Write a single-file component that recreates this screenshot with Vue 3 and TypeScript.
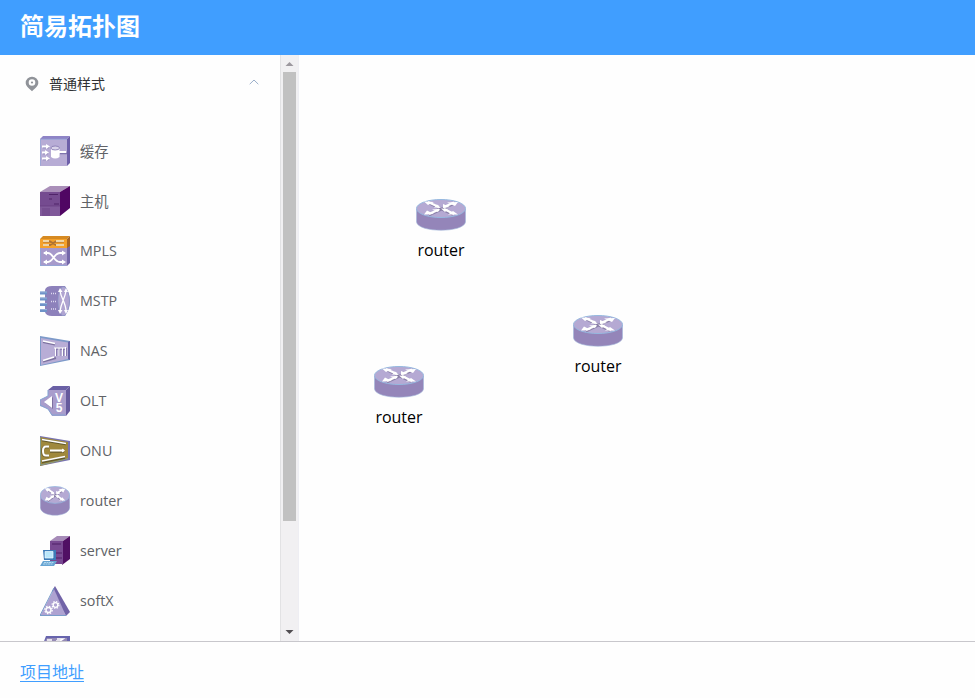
<script setup lang="ts">
interface PaletteItem {
  icon: string
  label: string
  marks?: string[]
}
interface TopoNode {
  id: number
  x: number
  y: number
  label: string
}

const palette: PaletteItem[] = [
  { icon: 'cache', label: '缓存' },
  { icon: 'host', label: '主机' },
  { icon: 'mpls', label: 'MPLS' },
  { icon: 'mstp', label: 'MSTP' },
  { icon: 'nas', label: 'NAS' },
  { icon: 'olt', label: 'OLT', marks: ['V', '5'] },
  { icon: 'onu', label: 'ONU' },
  { icon: 'router', label: 'router' },
  { icon: 'server', label: 'server' },
  { icon: 'softx', label: 'softX' },
  { icon: 'switch', label: '' },
]

const nodes: TopoNode[] = [
  { id: 1, x: 116, y: 144, label: 'router' },
  { id: 2, x: 273, y: 260, label: 'router' },
  { id: 3, x: 74, y: 311, label: 'router' },
]
</script>

<template>
  <div class="page">
    <svg class="defs" width="0" height="0">
      <symbol id="cache" viewBox="0 0 30 30">
        <path d="M0 3 3 0H30L27 3Z" fill="#8e84c6" />
        <path d="M27 3 30 0V27L27 30Z" fill="#6d5fa9" />
        <path d="M0 3H27V30H0Z" fill="#b7acd5" />
        <path d="M.4 29.5V3.2H27" fill="none" stroke="#93a5d8" stroke-width=".8" />
        <path d="M3 11.5H9M3 17.5H8M3 23.5H9M20 17.5H27" stroke="#7f74ad" stroke-width="1.6" />
        <path d="M2 10.5H7M2 16.5H6M2 22.5H7M19 16H26" stroke="#fff" stroke-width="1.8" />
        <path d="M6 8 10 10.5 6 13ZM5 14 9 16.5 5 19ZM6 20 10 22.5 6 25Z" fill="#fff" />
        <path d="M11 12V21Q15 24 19.500 21V12Z" fill="#fff" />
        <ellipse cx="15.200" cy="12" rx="4.300" ry="2" fill="#d9d3e9" stroke="#8175af" stroke-width=".8" />
      </symbol>
      <symbol id="host" viewBox="0 0 30 30">
        <path d="M0 6 10 0H30L20 6Z" fill="#aa8fb9" />
        <path d="M20 6 30 0V22L20 30Z" fill="#500663" />
        <path d="M0 6H20V30H0Z" fill="#754b90" />
        <path d="M0 20H20V30H0Z" fill="#80599a" />
        <path d="M0 20H20M3 22V30M5 22V30M7 22V30M9 22V30" stroke="#66397f" stroke-width=".7" />
        <path d="M9 8.500H18M9 13H12M14 18H19" stroke="#502469" stroke-width="1" />
      </symbol>
      <symbol id="mpls" viewBox="0 0 30 30">
        <path d="M0 3 3 0H30L27 3Z" fill="#d68a22" />
        <path d="M27 3 30 0V11L27 13Z" fill="#a96623" />
        <path d="M0 3H27V12H0Z" fill="#f4a12b" />
        <path d="M27 12 30 10V27L27 30Z" fill="#7467aa" />
        <path d="M0 12H27V30H0Z" fill="#a79acb" />
        <path d="M0 12V30H26" stroke="#83aede" fill="none" />
        <path d="M3 5.500H10L16 9H24M3 9H10L16 5.500H24" fill="none" stroke="#ac7234" stroke-width="1.800" />
        <path d="M3 5H9M3 9H9M16 5H24M16 9H24" stroke="#fff3cf" stroke-width="1.300" />
        <path d="M4 17H8C13 17 14 26 20 26H24M4 26H8C13 26 14 17 20 17H24" fill="none" stroke="#fff" stroke-width="1.800" />
        <path d="M3 17 7 14.500V19.500ZM3 26 7 23.500V28.500ZM26 17 22 14.500V19.500ZM26 26 22 23.500V28.500Z" fill="#fff" />
      </symbol>
      <symbol id="mstp" viewBox="0 0 30 30">
        <path d="M5 4Q6 0 12 0H25Q30 7 30 15T25 30H12Q6 30 5 26Z" fill="#8d81bb" />
        <path d="M22 1H25Q29.500 7 29.500 15T25 29.500H22Q18 23 18 15T22 1Z" fill="#b0a4d1" stroke="#8a9ac9" stroke-width=".6" />
        <path d="M0 7H7M0 13H7M0 18.500H7M0 24.500H7" stroke="#6f93c8" stroke-width="3" />
        <path d="M0 6H7M0 12H7M0 17.500H7M0 23.500H7" stroke="#a2b8dc" stroke-width=".8" />
        <path d="M11 7.500H17M11 15.500H17M11 23H17" stroke="#ded9ef" stroke-width="1.500" stroke-dasharray="1 1" />
        <path d="M20 5C21 12 26 17 26 25M26 5C25 12 21 17 20 25" stroke="#fff" stroke-width="1.300" fill="none" />
        <path d="M18 6 20 2 22.500 6ZM24 6 26 2 28 6ZM18 24 20 28 22.500 24ZM24 24 26 28 28 24Z" fill="#fff" />
      </symbol>
      <symbol id="nas" viewBox="0 0 30 30">
        <path d="M0 0 30 5V24L0 30Z" fill="#7d9ac9" />
        <path d="M1 2 28 6.500V23L1 29Z" fill="#b8add6" />
        <path d="M28 6 30 5V24L28 23Z" fill="#6862a8" />
        <path d="M3 6 15 8.500M3 25.500 16 22" stroke="#7c719f" stroke-width="2" />
        <path d="M3 5 15 7.500M3 24.500 14 21" stroke="#fff" stroke-width="1.700" />
        <path d="M15 13H26M16 13V20M19.500 13V20M23 13V20M26 12V20" stroke="#8175a9" stroke-width="1.700" />
        <path d="M14 12H25M15.500 12V20M19 12V20M22.500 12V20M25.500 11V20" stroke="#fff" stroke-width="1" />
      </symbol>
      <symbol id="olt" viewBox="0 0 30 30">
        <path d="M8 4 13 0H30L26 4Z" fill="#6a60a5" />
        <path d="M26 4 30 0V25L26 30Z" fill="#665a9d" />
        <path d="M8 4H26V30H12L8 23 0 20V14L8 10Z" fill="#a99dcc" />
        <path d="M8 4V10L0 14V19L8 23L12 29H25" fill="none" stroke="#82a4d2" />
        <path d="M13 11V23L5 17Z" fill="#7e719f" />
        <path d="M12 10V22L4 16Z" fill="#fff" />
      </symbol>
      <symbol id="onu" viewBox="0 0 30 30">
        <path d="M0 0 30 5V24L0 30Z" fill="#7772b3" />
        <path d="M0 1 28 6V23L0 30Z" fill="#9f883c" />
        <path d="M.5 1.500V29L28 22.500" fill="none" stroke="#819989" />
        <path d="M2 4 26 8M2 26 25 21.500" stroke="#62592c" stroke-width="2.500" />
        <path d="M2 3.500 26 7.500M2 25 25 20.500" stroke="#fff" stroke-width="1.600" />
        <path d="M9 11H6Q2.500 11 2.500 15Q2.500 20 6 20H9M10 15.500H24" fill="none" stroke="#756633" stroke-width="3" />
        <path d="M9 10.500H6Q3 10.500 3 15Q3 19.500 6 19.500H9M10 14.500H24" fill="none" stroke="#fff" stroke-width="2" />
        <path d="M22 12.500 25 14.500 22 16.500Z" fill="#fff" />
      </symbol>
      <symbol id="router" viewBox="0 0 50 32" preserveAspectRatio="none">
        <path d="M.5 10V23C2 34 48 34 49.500 23V10Z" fill="#9485b9" />
        <path d="M.5 10V23C2 34 48 34 49.500 23V10" fill="none" stroke="#a2b8dc" stroke-width=".6" />
        <ellipse cx="25" cy="9.500" rx="24.500" ry="9" fill="#b5a9d3" stroke="#95b8df" />
        <path d="M13 4 37 15.500M37 5 13 16" stroke="#8a7fa8" stroke-width="2.500" />
        <path d="M12 3 23 8M28 10 38 15M38 3.500 28 8M23 10.500 13 15" stroke="#fff" stroke-width="2.200" />
        <path d="M8 2.500 18 3 12 6ZM42 3 39 7 31 3.500ZM42 15.500H32L37 12ZM8 15.500 11 11.500 18 15Z" fill="#fff" />
        <path d="M18 8.500 25 9 21 5.500ZM32 10 25 9.500 29 13ZM27 5 27 9 34 8ZM16 10.500 24 10 22 13Z" fill="#fff" />
      </symbol>
      <symbol id="server" viewBox="0 0 30 30">
        <path d="M10 5 17 0H30L23 5Z" fill="#a68bb8" />
        <path d="M23 5 30 0V23L22 29Z" fill="#501064" />
        <path d="M10 5H23V28H10Z" fill="#784992" />
        <path d="M12 8H21M13 17H22M15 22H22" stroke="#4f2167" />
        <path d="M3 14H16V24H4Z" fill="#3c7bb8" />
        <path d="M5 15.500H13V22H5Z" fill="#b9e7fb" stroke="#eefaff" stroke-width=".7" />
        <path d="M3 25H17L14 30H0Z" fill="#67a4d2" />
        <path d="M4 26.500H14M3 28H13" stroke="#d4effb" stroke-width=".7" stroke-dasharray="2 .5" />
      </symbol>
      <symbol id="softx" viewBox="0 0 30 30">
        <path d="M15 0 30 26 26 30 12 5Z" fill="#7163a7" />
        <path d="M14 3 26 30H0Z" fill="#aea2d1" />
        <path d="M14 2 0 29.500H26" fill="none" stroke="#799dca" />
        <g fill="none" stroke="#fff">
          <circle cx="8.500" cy="24" r="2.500" stroke-width="1.400" />
          <circle cx="8.500" cy="24" r="3.700" stroke-width="1.300" stroke-dasharray="1.500 1.400" />
          <circle cx="15.500" cy="19" r="2.300" stroke-width="1.300" />
          <circle cx="15.500" cy="19" r="3.400" stroke-width="1.200" stroke-dasharray="1.400 1.270" />
        </g>
      </symbol>
      <symbol id="switch" viewBox="0 0 30 30">
        <path d="M6 0H30V8H3Z" fill="#6764ad" />
        <path d="M4 7 7 2H27V8H3Z" fill="#958ab5" />
        <path d="M7 4H12M17 3H23L20 5H16" fill="none" stroke="#fff" stroke-width="1.500" />
      </symbol>
    </svg>

    <header class="header"><h1>简易拓扑图</h1></header>
    <main class="workspace">
      <aside class="sidebar">
        <div class="panel">
          <div class="group-title">
            <svg class="pin" viewBox="0 0 14 16">
              <path fill-rule="evenodd" d="M7 .7A6.200 6.200 0 0 0 .7 7C.7 10 3.500 12 7 15.300 10.500 12 13.300 10 13.300 7A6.200 6.200 0 0 0 7 .7ZM7 3.200A3.300 3.300 0 1 1 7 9.800 3.300 3.300 0 0 1 7 3.200Z" fill="#909399" />
              <circle cx="7" cy="6.500" r="1.100" fill="#909399" />
            </svg>
            <span class="group-name">普通样式</span>
            <svg class="chevron" viewBox="0 0 10 6"><path d="M.7 5.200 5 1 9.300 5.200" fill="none" stroke="#9aafca" /></svg>
          </div>
          <ul class="palette">
            <li v-for="item in palette" :key="item.icon">
              <div class="device">
                <svg><use :href="'#' + item.icon" /></svg>
                <div v-if="item.marks" class="marks">
                  <span v-for="mark in item.marks" :key="mark">{{ mark }}</span>
                </div>
              </div>
              <span class="name">{{ item.label }}</span>
            </li>
          </ul>
        </div>
        <div class="scrollbar">
          <svg class="arrow" viewBox="0 0 17 17"><path d="M4.500 11 8.500 7 12.500 11Z" fill="#9c989e" /></svg>
          <div class="thumb"></div>
          <svg class="arrow down" viewBox="0 0 17 17"><path d="M4.500 6 8.500 10 12.500 6Z" fill="#504d51" /></svg>
        </div>
      </aside>
      <section class="canvas">
        <div v-for="node in nodes" :key="node.id" class="node" :style="{ left: node.x + 'px', top: node.y + 'px' }">
          <svg><use href="#router" /></svg>
          <span>{{ node.label }}</span>
        </div>
      </section>
    </main>
    <footer class="footer"><a href="#">项目地址</a></footer>
  </div>
</template>

<style>
body {
  margin: 0;
  overflow: hidden;
}
</style>

<style scoped>
.page {
  display: flex;
  flex-direction: column;
  width: 100%;
  height: 698px;
  overflow: hidden;
  background: #fefefe;
  font-family: "Open Sans", "Noto Sans CJK SC", sans-serif;
}
.defs {
  display: block;
  flex: none;
}
.header {
  height: 55px;
  flex: none;
  padding-left: 20px;
  background: #409eff;
}
h1 {
  margin: 0;
  color: #fff;
  font: bold 24px/50px "Noto Sans CJK SC", sans-serif;
}
.workspace {
  display: flex;
  height: 586px;
  flex: none;
}
.sidebar {
  display: flex;
  width: 300px;
  flex: none;
  overflow: hidden;
}
.panel {
  width: 280px;
  flex: none;
}
.group-title {
  display: flex;
  align-items: center;
  height: 58px;
  padding: 0 21px 0 25px;
  color: #303133;
  font-size: 14px;
}
.group-name {
  padding-bottom: 2px;
}
.pin {
  width: 14px;
  height: 16px;
  margin-right: 10px;
}
.chevron {
  width: 10px;
  height: 6px;
  margin: 0 0 4px auto;
}
.palette {
  margin: 0;
  padding: 13px 0 0 40px;
  list-style: none;
}
.palette li {
  display: flex;
  align-items: center;
  gap: 10px;
  height: 50px;
  color: #606266;
  font-size: 14.3px;
}
.name {
  padding-bottom: 2px;
}
.device {
  position: relative;
  width: 30px;
  height: 30px;
}
.device svg {
  display: block;
  width: 30px;
  height: 30px;
}
.marks {
  position: absolute;
  top: 7px;
  left: 14px;
  display: flex;
  flex-direction: column;
  align-items: center;
  width: 10px;
  color: #fff;
  font: bold 12px/10px "Liberation Sans", sans-serif;
}
.scrollbar {
  display: flex;
  flex-direction: column;
  width: 17px;
  border-left: 1px solid #e2e2e4;
  border-right: 1px solid #eeeef3;
  background: #f1f0f2;
}
.arrow {
  width: 17px;
  height: 17px;
}
.thumb {
  width: 13px;
  height: 449px;
  margin-left: 2px;
  background: #c1c1c1;
}
.down {
  margin-top: auto;
}
.canvas {
  position: relative;
  flex: 1;
}
.node {
  position: absolute;
  display: flex;
  width: 50px;
  flex-direction: column;
  align-items: center;
  color: #000;
  font-size: 16px;
}
.node svg {
  width: 50px;
  height: 32px;
}
.node span {
  margin-top: 8px;
  line-height: 22px;
}
.footer {
  flex: 1;
  border-top: 1px solid #c8c7cc;
  padding: 17px 20px 0;
}
.footer a {
  color: #409eff;
  font: 16px/24px "Noto Sans CJK SC", sans-serif;
  text-underline-offset: 3px;
}
</style>
